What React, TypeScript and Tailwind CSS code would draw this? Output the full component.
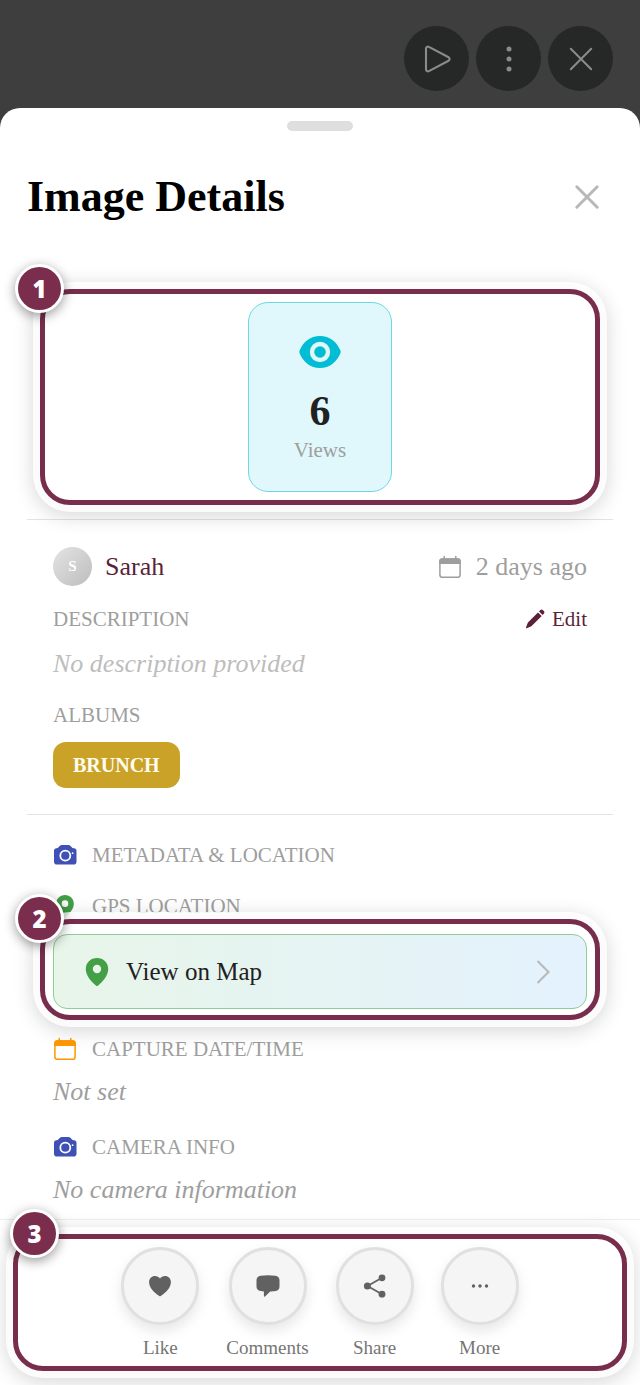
import React from 'react';

// Text styles used by more than one row
const labelText = "text-[21px] leading-[26px] text-[#9e9e9e] uppercase";
const valueText = "text-[26px] leading-8 italic";

function PlayIcon() {
  return (
    <svg className="w-[30px] h-[30px]" viewBox="0 0 30 30" fill="none" stroke="currentColor" strokeWidth="2.1" strokeLinejoin="round">
      <path d="M4 4.600v20.800c0 1.700 1.500 2.500 2.900 1.700l19.700-10.400c1.300-.8 1.300-2.600 0-3.400L6.900 2.900C5.500 2.100 4 2.900 4 4.600z" />
    </svg>
  );
}

function DotsVerticalIcon() {
  return (
    <svg className="w-[30px] h-[30px]" viewBox="0 0 30 30" fill="currentColor">
      <circle cx="15" cy="5" r="2.500" />
      <circle cx="15" cy="15" r="2.500" />
      <circle cx="15" cy="25" r="2.500" />
    </svg>
  );
}

function CrossIcon({ strokeWidth }: { strokeWidth: number }) {
  return (
    <svg className="w-[30px] h-[30px]" viewBox="0 0 30 30" fill="none" stroke="currentColor" strokeWidth={strokeWidth} strokeLinecap="round">
      <path d="M4.800 4.800l20.400 20.400M25.200 4.800L4.800 25.200" />
    </svg>
  );
}

function EyeIcon() {
  return (
    <svg className="w-[42px] h-[42px]" viewBox="0 0 42 42" fill="none">
      <path d="M21 5C11.500 5 4.200 10.800.6 19.600c-.4.900-.4 1.700 0 2.600C4.200 31 11.500 37 21 37s16.800-6 20.400-14.800c.4-.9.4-1.700 0-2.600C37.800 10.800 30.500 5 21 5z" fill="#00bcd4" />
      <circle cx="21" cy="21" r="8" stroke="#e0f7fa" strokeWidth="4.400" />
    </svg>
  );
}

function CalendarIcon() {
  return (
    <svg className="w-6 h-6" viewBox="0 0 24 24" fill="none" stroke="currentColor">
      <rect x="1.900" y="4" width="20.200" height="18.300" rx="2.600" strokeWidth="1.500" />
      <path d="M1.200 9V6.200c0-1.700 1.200-2.900 2.800-2.900h16c1.600 0 2.800 1.200 2.800 2.900V9z" fill="currentColor" stroke="none" />
      <path d="M6.200 1.500v3M17.800 1.500v3" strokeWidth="1.500" strokeLinecap="round" />
    </svg>
  );
}

function CameraIcon() {
  return (
    <svg className="w-6 h-6" viewBox="0 0 24 24" fill="none">
      <path d="M9 2.100h6.400c.9 0 1.600.3 2.200.9l1.900 1.900c1 .2 1.900.4 2.600.7.900.5 1.400 1.200 1.400 2.400v10.700c0 1.800-1.100 2.900-2.900 2.900H3.900C2.100 21.600 1 20.500 1 18.700V8c0-1.200.5-1.900 1.400-2.400.7-.3 1.500-.5 2.400-.7L6.700 3c.6-.6 1.400-.9 2.300-.9z" fill="#3f51b5" />
      <circle cx="12.300" cy="12.700" r="5" stroke="#fff" strokeWidth="1.800" />
      <circle cx="19.600" cy="10.200" r=".9" fill="#fff" />
    </svg>
  );
}

function PinIcon({ className }: { className: string }) {
  return (
    <svg className={className} viewBox="0 0 24 28">
      <path fillRule="evenodd" d="M12 0C5.600 0 .8 4.700.8 11c0 6.700 5.200 12.400 10.300 16.700.6.400 1.200.4 1.800 0C18 23.400 23.200 17.700 23.200 11 23.200 4.700 18.400 0 12 0zm0 15.200a4.200 4.200 0 1 1 0-8.400 4.200 4.200 0 0 1 0 8.400z" fill="#43a047" />
    </svg>
  );
}

function PencilIcon() {
  return (
    <svg className="w-5 h-5" viewBox="0 0 20 20" fill="currentColor">
      <path d="M13 3.400l3.700 3.700L6.400 17.300l-4.700 1.900c-.5.100-.9-.3-.7-.8l1.900-4.800z" />
      <path d="M14 2.400l1.200-1.200c.9-.9 2-.8 2.800 0l.8.800c.8.800.9 1.900 0 2.800l-1.200 1.200z" />
    </svg>
  );
}

function ChevronIcon() {
  return (
    <svg className="w-6 h-6" viewBox="0 0 24 24" fill="none" stroke="#b5b9b9" strokeWidth="2">
      <path d="M6.500 1l11 11-11 11" />
    </svg>
  );
}

function HeartIcon() {
  return (
    <svg className="w-6 h-6" viewBox="0 0 24 24" fill="currentColor">
      <path d="M17 2c-2.100 0-3.900 1-5 2.600C10.900 3 9.100 2 7 2 3.700 2 1.100 4.600 1.100 8c0 6.200 5.300 10.600 10.200 14.100.4.300 1 .3 1.400 0C17.600 18.600 22.900 14.200 22.900 8c0-3.400-2.600-6-5.900-6z" />
    </svg>
  );
}

function CommentIcon() {
  return (
    <svg className="w-6 h-6" viewBox="0 0 24 24" fill="currentColor">
      <path d="M4.700 1.700c4.900-.7 9.700-.7 14.600 0 2.700.4 4.200 1.900 4.200 4.500v6.400c0 2.600-1.300 4-3.900 4.400-2.200.3-3.600.4-5.400.4L9 22.500c-.5.500-1.100.2-1.100-.5v-4.600c-1.100-.1-2-.2-3.200-.4C1.900 16.600.5 15.200.5 12.600V6.200c0-2.600 1.500-4.100 4.200-4.500z" />
    </svg>
  );
}

function ShareIcon() {
  return (
    <svg className="w-6 h-6" viewBox="0 0 24 24" fill="currentColor">
      <path d="M19 3.800L4.500 12 19 20.200" fill="none" stroke="currentColor" strokeWidth="1.700" />
      <circle cx="4.400" cy="12" r="3.500" />
      <circle cx="19" cy="3.800" r="3.400" />
      <circle cx="19" cy="20.200" r="3.400" />
    </svg>
  );
}

function MoreIcon() {
  return (
    <svg className="w-6 h-6" viewBox="0 0 24 24" fill="currentColor">
      <circle cx="5.500" cy="12" r="1.700" />
      <circle cx="12" cy="12" r="1.700" />
      <circle cx="18.500" cy="12" r="1.700" />
    </svg>
  );
}

interface CalloutProps {
  number: number;
  className: string;
  badgeClassName: string;
  children: React.ReactNode;
}

// Numbered frame that highlights a part of the sheet
function Callout({ number, className, badgeClassName, children }: CalloutProps) {
  return (
    <div className={`relative rounded-[30px] border-[5px] border-[#782d4c] shadow-[0_0_0_7px_rgba(255,255,255,0.85),0_4px_20px_7px_rgba(0,0,0,0.16)] ${className}`}>
      <span className={`absolute -top-[30px] flex items-center justify-center w-[49px] h-[49px] rounded-full border-[3px] border-white bg-[#7b2d4e] font-['Open_Sans',sans-serif] text-2xl font-extrabold text-white shadow-[0_3px_12px_rgba(0,0,0,0.4)] ${badgeClassName}`}>
        {number}
      </span>
      {children}
    </div>
  );
}

const topButtons = [
  { label: "Play", icon: <PlayIcon /> },
  { label: "Options", icon: <DotsVerticalIcon /> },
  { label: "Close viewer", icon: <CrossIcon strokeWidth={2} /> },
];

const actions = [
  { label: "Like", icon: <HeartIcon /> },
  { label: "Comments", icon: <CommentIcon /> },
  { label: "Share", icon: <ShareIcon /> },
  { label: "More", icon: <MoreIcon /> },
];

function App() {
  return (
    <div className="bg-[#3e3e3e] font-['Liberation_Serif',serif]">
      <div className="flex justify-end gap-[7px] px-[27px] pt-[26px] pb-[17px]">
        {topButtons.map((button) => (
          <button key={button.label} aria-label={button.label} className="flex items-center justify-center w-[65px] h-[65px] rounded-full bg-[#262727] text-[#8b8b8b]">
            {button.icon}
          </button>
        ))}
      </div>

      <main className="overflow-hidden rounded-t-[20px] bg-white">
        <div className="mx-auto mt-[13px] w-[66px] h-[10px] rounded-full bg-[#dedede]"></div>

        <header className="flex items-center justify-between pt-10 pb-[66px] pl-[27px] pr-[38px]">
          <h1 className="text-[44px] leading-[52px] font-bold text-black">Image Details</h1>
          <button aria-label="Close" className="text-[#b8b8b8]">
            <CrossIcon strokeWidth={3} />
          </button>
        </header>

        <Callout number={1} className="mx-10 py-2" badgeClassName="-left-[30px]">
          <div className="flex flex-col items-center mx-auto w-36 pt-7 pb-7 rounded-[20px] border border-[#6fd6e3] bg-[#e0f7fb]">
            <EyeIcon />
            <p className="pt-4 text-[42px] leading-[44px] font-bold text-[#212121]">6</p>
            <p className="pt-1 text-[21px] leading-[26px] text-[#9e9e9e]">Views</p>
          </div>
        </Callout>

        <section className="mx-[27px] mt-[14px] px-[26px] pt-[27px] pb-[26px] border-y border-[#e3e3e3]">
          <div className="flex items-center justify-between">
            <div className="flex items-center gap-[13px]">
              <span className="flex items-center justify-center w-[39px] h-[39px] rounded-full bg-linear-to-br from-[#e4e4e4] to-[#bdbdbd] text-[15px] font-bold text-white">S</span>
              <span className="text-[26px] leading-8 text-[#5c1f3a]">Sarah</span>
            </div>
            <div className="flex items-center gap-[14px] text-[#9e9e9e]">
              <CalendarIcon />
              <span className="text-[26px] leading-8">2 days ago</span>
            </div>
          </div>

          <div className="flex items-center justify-between pt-5">
            <h2 className={labelText}>Description</h2>
            <button className="flex items-center gap-[7px] text-[21px] leading-[26px] text-[#5c1f3a]">
              <PencilIcon />
              Edit
            </button>
          </div>
          <p className={`${valueText} pt-4 text-[#bdbdbd]`}>No description provided</p>

          <h2 className={`${labelText} pt-[22px] pb-[14px]`}>Albums</h2>
          <button className="px-5 h-[46px] rounded-[13px] bg-[#c9a227] text-xl font-bold text-[#fffdf0]">BRUNCH</button>
        </section>

        <section className="pt-[27px]">
          <h2 className={`${labelText} flex items-center gap-[15px] px-[53px]`}>
            <CameraIcon />
            Metadata &amp; Location
          </h2>
          <h2 className={`${labelText} flex items-center gap-[15px] px-[53px] pt-[25px]`}>
            <PinIcon className="w-6 h-[22px]" />
            GPS Location
          </h2>

          <Callout number={2} className="mx-10 px-2 pt-[10px] pb-[6px]" badgeClassName="-left-[30px]">
            <button className="flex items-center w-full h-[75px] px-[31px] rounded-[14px] border border-[#8fcd94] bg-linear-to-r from-[#e8f5e9] to-[#e3f2fd] text-[25px] text-[#212121]">
              <PinIcon className="w-6 h-7" />
              <span className="pl-[17px]">View on Map</span>
              <span className="ml-auto"><ChevronIcon /></span>
            </button>
          </Callout>

          <div className="px-[53px] pb-[13px]">
            <h2 className={`${labelText} flex items-center gap-[15px] pt-4`}>
              <span className="text-[#ff9800]"><CalendarIcon /></span>
              Capture Date/Time
            </h2>
            <p className={`${valueText} pt-[14px] text-[#9e9e9e]`}>Not set</p>
            <h2 className={`${labelText} flex items-center gap-[15px] pt-[26px]`}>
              <CameraIcon />
              Camera Info
            </h2>
            <p className={`${valueText} pt-[14px] text-[#9e9e9e]`}>No camera information</p>
          </div>
        </section>

        <footer className="px-[13px] py-[14px] border-t border-[#eeeeee]">
          <Callout number={3} className="pt-2 pb-[6px]" badgeClassName="-left-2">
            <div className="flex justify-center gap-[27px]">
              {actions.map((action) => (
                <button key={action.label} className="flex flex-col items-center gap-[11px] text-[19px] leading-6 text-[#757575]">
                  <span className="flex items-center justify-center w-[78px] h-[78px] rounded-full border-[3px] border-[#e0e0e0] bg-[#f5f5f5] text-[#616161] shadow-[0_6px_14px_rgba(0,0,0,0.1)]">
                    {action.icon}
                  </span>
                  {action.label}
                </button>
              ))}
            </div>
          </Callout>
        </footer>
      </main>
    </div>
  );
}

export default App;
